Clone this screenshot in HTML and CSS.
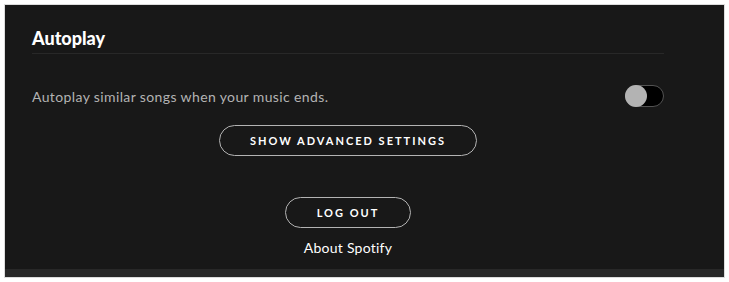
FILE: index.html
```html
<!DOCTYPE html>
<html lang="en">
<head>
<meta charset="utf-8">
<title>Settings</title>
<link rel="stylesheet" href="styles.css">
</head>
<body>
<div class="frame">
  <div class="content">
    <h2 class="section-title">Autoplay</h2>
    <div class="row">
      <span class="row-label">Autoplay similar songs when your music ends.</span>
      <span class="toggle"><span class="knob"></span></span>
    </div>
    <div class="center">
      <button class="pill pill-wide">SHOW ADVANCED SETTINGS</button>
    </div>
    <div class="center logout">
      <button class="pill pill-narrow">LOG OUT</button>
      <a class="about">About Spotify</a>
    </div>
  </div>
  <div class="strip"></div>
</div>
</body>
</html>
```
FILE: styles.css
```css
html, body {
  margin: 0;
  padding: 0;
  background: #ffffff;
}
body {
  font-family: "Lato", "Noto Sans", sans-serif;
}
.frame {
  margin: 5px;
  width: 719px;
  height: 272px;
  background: #181818;
  box-shadow: 0 0 0 1px #dcdcdc;
  display: flex;
  flex-direction: column;
}
.content {
  flex: 1;
  padding: 0 60px 0 27px;
  display: flex;
  flex-direction: column;
}
.section-title {
  margin: 0;
  padding-top: 21px;
  padding-bottom: 3px;
  font-size: 18px;
  line-height: 24px;
  font-weight: 900;
  color: #ffffff;
  border-bottom: 1px solid #282828;
}
.row {
  display: flex;
  align-items: center;
  justify-content: space-between;
  margin-top: 31px;
  height: 22px;
}
.row-label {
  font-size: 14px;
  color: #b3b3b3;
  letter-spacing: 0.38px;
}
.toggle {
  width: 37px;
  height: 20px;
  border: 1px solid #535353;
  border-radius: 11px;
  background: #000;
  position: relative;
  box-sizing: content-box;
}
.knob {
  position: absolute;
  left: -1px;
  top: -1px;
  width: 22px;
  height: 22px;
  border-radius: 50%;
  background: #b3b3b3;
}
.center {
  display: flex;
  flex-direction: column;
  align-items: center;
}
.pill {
  font-family: inherit;
  background: transparent;
  color: #ffffff;
  border: 1px solid #b3b3b3;
  border-radius: 500px;
  font-size: 11px;
  font-weight: 700;
  letter-spacing: 2px;
  height: 31px;
  padding: 0;
  cursor: pointer;
}
.pill-wide {
  margin-top: 18px;
  width: 258px;
}
.pill-narrow {
  margin-top: 41px;
  width: 126px;
}
.about {
  margin-top: 11px;
  font-size: 14px;
  color: #ffffff;
  line-height: 18px;
  letter-spacing: 0.25px;
}
.strip {
  height: 8px;
  background: #282828;
}
```
